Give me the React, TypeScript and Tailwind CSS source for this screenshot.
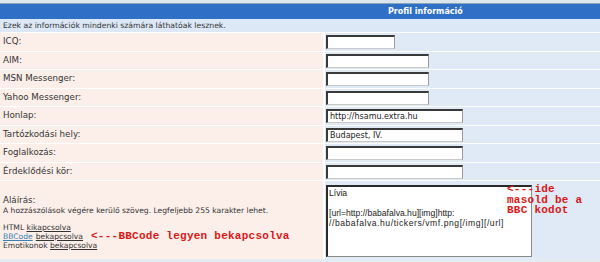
const labelFont = { fontFamily: '"DejaVu Sans", Verdana, sans-serif' };
const monoFont = { fontFamily: '"Liberation Mono", "Courier New", monospace' };

type Field = { label: string; width: string; value?: string; h: string };

const fields: Field[] = [
  { label: "ICQ:", width: "w-[69px]", h: "h-[18px]" },
  { label: "AIM:", width: "w-[103px]", h: "h-[17px]" },
  { label: "MSN Messenger:", width: "w-[103px]", h: "h-[18px]" },
  { label: "Yahoo Messenger:", width: "w-[103px]", h: "h-[17px]" },
  { label: "Honlap:", width: "w-[137px]", value: "http://hsamu.extra.hu", h: "h-[18px]" },
  { label: "Tartózkodási hely:", width: "w-[137px]", value: "Budapest, IV.", h: "h-[17px]" },
  { label: "Foglalkozás:", width: "w-[137px]", h: "h-[18px]" },
  { label: "Érdeklődési kör:", width: "w-[137px]", h: "h-[17px]" }
];

function TextBox({ width, value }: { width: string; value?: string }) {
  return (
    <div
      className={`${width} h-[14px] bg-white border-t-2 border-l-2 border-r border-b border-t-[#3a3a3a] border-l-[#3a3a3a] border-r-[#9a9a9a] border-b-[#c8c8c8] pl-[2px] text-[8px] leading-[11px] text-[#222]`}
      style={labelFont}
    >
      {value}
    </div>
  );
}

export default function App() {
  return (
    <div className="relative w-[600px] h-[262px] overflow-hidden bg-[#e4ebf1]" style={labelFont}>
      <div className="h-[3px] bg-[#dde6ec]" />
      <div className="h-px bg-[#8aa6b8]" />
      <div className="h-[15px] bg-[#2f6fc5] pl-[388px] text-[8px] font-bold leading-[15px] text-white">
        Profil információ
      </div>
      <div className="h-[13px] bg-[#dce8f6] pl-[3px] text-[7.7px] leading-[13px] text-[#333]">
        Ezek az információk mindenki számára láthatóak lesznek.
      </div>
      <div className="flex flex-col gap-px bg-white pt-px">
        {fields.map((f) => (
          <div key={f.label} className={`flex gap-[2px] ${f.h}`}>
            <div className="w-[323px] bg-[#fcefea] pl-[3px] flex items-center text-[8.7px] text-[#333]">
              {f.label}
            </div>
            <div className="flex-1 bg-[#dfeaf6] pl-px flex items-center">
              <TextBox width={f.width} value={f.value} />
            </div>
          </div>
        ))}
        <div className="flex gap-[2px] h-[78px]">
          <div className="w-[323px] bg-[#fcefea] pl-[3px] pt-[14px] text-[#333]">
            <div className="text-[8.7px] leading-[11px]">Aláírás:</div>
            <div className="text-[7.6px] leading-[9px]">
              A hozzászólások végére kerülő szöveg. Legfeljebb 255 karakter lehet.
            </div>
            <div className="mt-[8px] text-[7.6px] leading-[9px]">
              <div>
                HTML <span className="underline">kikapcsolva</span>
              </div>
              <div className="flex items-center">
                <span className="underline text-[#3a7fb0]">BBCode</span>
                <span className="ml-[3px] underline">bekapcsolva</span>
                <span className="ml-[8px] text-[11px] tracking-[0.25px] font-bold text-[#d81818] leading-[9px]" style={monoFont}>
                  {"<---BBCode legyen bekapcsolva"}
                </span>
              </div>
              <div>
                Emotikonok <span className="underline">bekapcsolva</span>
              </div>
            </div>
          </div>
          <div className="flex-1 bg-[#dfeaf6] pl-px pt-[4px]">
            <div
              className="w-[206px] h-[72px] overflow-hidden bg-white border-t-2 border-l-2 border-r border-b border-t-[#2a2a2a] border-l-[#2a2a2a] border-r-[#8a8a8a] border-b-[#8a8a8a] pl-[1px] pt-[1px] text-[8.6px] leading-[10px] text-[#222]"
              style={{ fontFamily: '"Liberation Sans", Arial, sans-serif' }}
            >
              <div>Lívia</div>
              <div>&nbsp;</div>
              <div>[url=http://babafalva.hu][img]http:</div>
              <div className="tracking-[0.55px] whitespace-nowrap">//babafalva.hu/tickers/vmf.png[/img][/url]</div>
            </div>
          </div>
        </div>
      </div>
      <div
        className="absolute left-[507px] top-[184px] text-[11px] tracking-[0.25px] font-bold leading-[10.5px] text-[#d81818] whitespace-pre"
        style={monoFont}
      >
        {"<---ide\nmasold be a\nBBC kodot"}
      </div>
    </div>
  );
}
